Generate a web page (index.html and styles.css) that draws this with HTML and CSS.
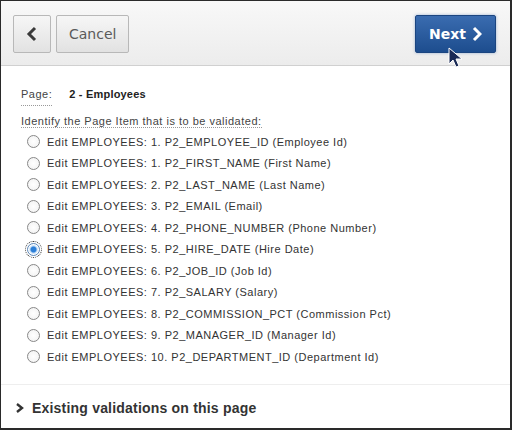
FILE: index.html
```html
<!DOCTYPE html>
<html>
<head>
<meta charset="utf-8">
<link rel="stylesheet" href="styles.css">
</head>
<body>
<div class="window">
  <div class="toolbar">
    <div class="left">
      <button class="btn icon-btn" aria-label="Back">
        <svg width="12" height="16" viewBox="0 0 12 16"><path d="M9 2 L3 8 L9 14" fill="none" stroke="#3a3a3a" stroke-width="3"/></svg>
      </button>
      <button class="btn">Cancel</button>
    </div>
    <button class="btn primary">Next
      <svg width="10" height="16" viewBox="0 0 10 16"><path d="M2 2 L8 8 L2 14" fill="none" stroke="#fff" stroke-width="3"/></svg>
    </button>
  </div>
  <div class="content">
    <div class="page-row"><span class="label">Page:</span><span class="page-val">2 - Employees</span></div>
    <div class="prompt"><span class="label">Identify the Page Item that is to be validated:</span></div>
    <ul class="items">
      <li><span class="radio"></span>Edit EMPLOYEES: 1. P2_EMPLOYEE_ID (Employee Id)</li>
      <li><span class="radio"></span>Edit EMPLOYEES: 1. P2_FIRST_NAME (First Name)</li>
      <li><span class="radio"></span>Edit EMPLOYEES: 2. P2_LAST_NAME (Last Name)</li>
      <li><span class="radio"></span>Edit EMPLOYEES: 3. P2_EMAIL (Email)</li>
      <li><span class="radio"></span>Edit EMPLOYEES: 4. P2_PHONE_NUMBER (Phone Number)</li>
      <li><span class="radio checked"></span>Edit EMPLOYEES: 5. P2_HIRE_DATE (Hire Date)</li>
      <li><span class="radio"></span>Edit EMPLOYEES: 6. P2_JOB_ID (Job Id)</li>
      <li><span class="radio"></span>Edit EMPLOYEES: 7. P2_SALARY (Salary)</li>
      <li><span class="radio"></span>Edit EMPLOYEES: 8. P2_COMMISSION_PCT (Commission Pct)</li>
      <li><span class="radio"></span>Edit EMPLOYEES: 9. P2_MANAGER_ID (Manager Id)</li>
      <li><span class="radio"></span>Edit EMPLOYEES: 10. P2_DEPARTMENT_ID (Department Id)</li>
    </ul>
  </div>
  <div class="footer">
    <svg width="10" height="12" viewBox="0 0 10 12"><path d="M2 2 L7 6 L2 10" fill="none" stroke="#333" stroke-width="2.4"/></svg>
    <span>Existing validations on this page</span>
  </div>
  <svg class="cursor" width="20" height="24" viewBox="0 0 20 24"><path d="M1 1 L1 17 L5 13 L8 20 L11 19 L8 12 L14 12 Z" fill="#1a2a55" stroke="#fff" stroke-width="1"/></svg>
</div>
</body>
</html>
```
FILE: styles.css
```css
html, body { margin: 0; padding: 0; }
body { width: 512px; height: 430px; overflow: hidden; background: #fff; }
.window {
  position: relative;
  box-sizing: border-box;
  width: 512px; height: 430px;
  border: 1px solid #2a2a2a;
  border-right-width: 2px;
  border-bottom-width: 2px;
  background: #fff;
  display: flex; flex-direction: column;
  font-family: "Liberation Sans", Arial, sans-serif;
  color: #333;
}
.toolbar {
  height: 65px;
  flex: none;
  box-sizing: border-box;
  border-bottom: 1px solid #d0d0d0;
  background: linear-gradient(#f8f8f8, #ececec);
  display: flex; align-items: center; justify-content: space-between;
  padding: 1px 14px 0 12px;
}
.left { display: flex; gap: 5px; }
.btn {
  height: 38px;
  box-sizing: border-box;
  border: 1px solid #b8b8b8;
  border-radius: 2px;
  background: linear-gradient(#f6f6f6, #e2e2e2);
  font-family: "DejaVu Sans", sans-serif;
  font-size: 14px;
  color: #5a5a5a;
  padding: 0 12px;
  display: flex; align-items: center; justify-content: center;
}
.icon-btn { width: 38px; padding: 0; }
.primary {
  width: 81px;
  background: linear-gradient(#3a6cb0, #1d4d8e);
  border: 1px solid #1b4580;
  color: #fff;
  font-weight: bold;
  gap: 6px;
  box-shadow: 0 0 3px rgba(60,110,180,0.5);
}
.content { padding: 22px 0 0 20px; flex: 1; font-size: 11px; letter-spacing: 0.5px; }
.label { border-bottom: 1px dotted #999; color: #444; }
.page-row { height: 18px; display: flex; gap: 17px; }
.page-val { font-weight: bold; color: #222; letter-spacing: 0.2px; }
.prompt { margin-top: 9px; height: 16px; }
.items { list-style: none; margin: 0; padding: 0 0 0 6px; }
.items li { height: 21.5px; display: flex; align-items: center; color: #333; }
.radio {
  width: 11px; height: 11px;
  border: 1px solid #888;
  border-radius: 50%;
  background: radial-gradient(#fff, #f0f0f0);
  margin-right: 7px;
  flex: none;
}
.radio.checked {
  background: radial-gradient(circle, #2c7fd8 0 2.5px, #bcd8f5 3.5px, #fff 5px);
  border-color: #5a86b8;
  outline: 1px dotted #333;
  outline-offset: 1px;
}
.footer {
  height: 44px;
  flex: none;
  box-sizing: border-box;
  border-top: 1px solid #eee;
  display: flex; align-items: center; gap: 7px;
  padding: 2px 0 0 14px;
  font-size: 14px; font-weight: bold; color: #333;
  letter-spacing: 0.2px;
}
.cursor { position: absolute; left: 447px; top: 46px; }
```
